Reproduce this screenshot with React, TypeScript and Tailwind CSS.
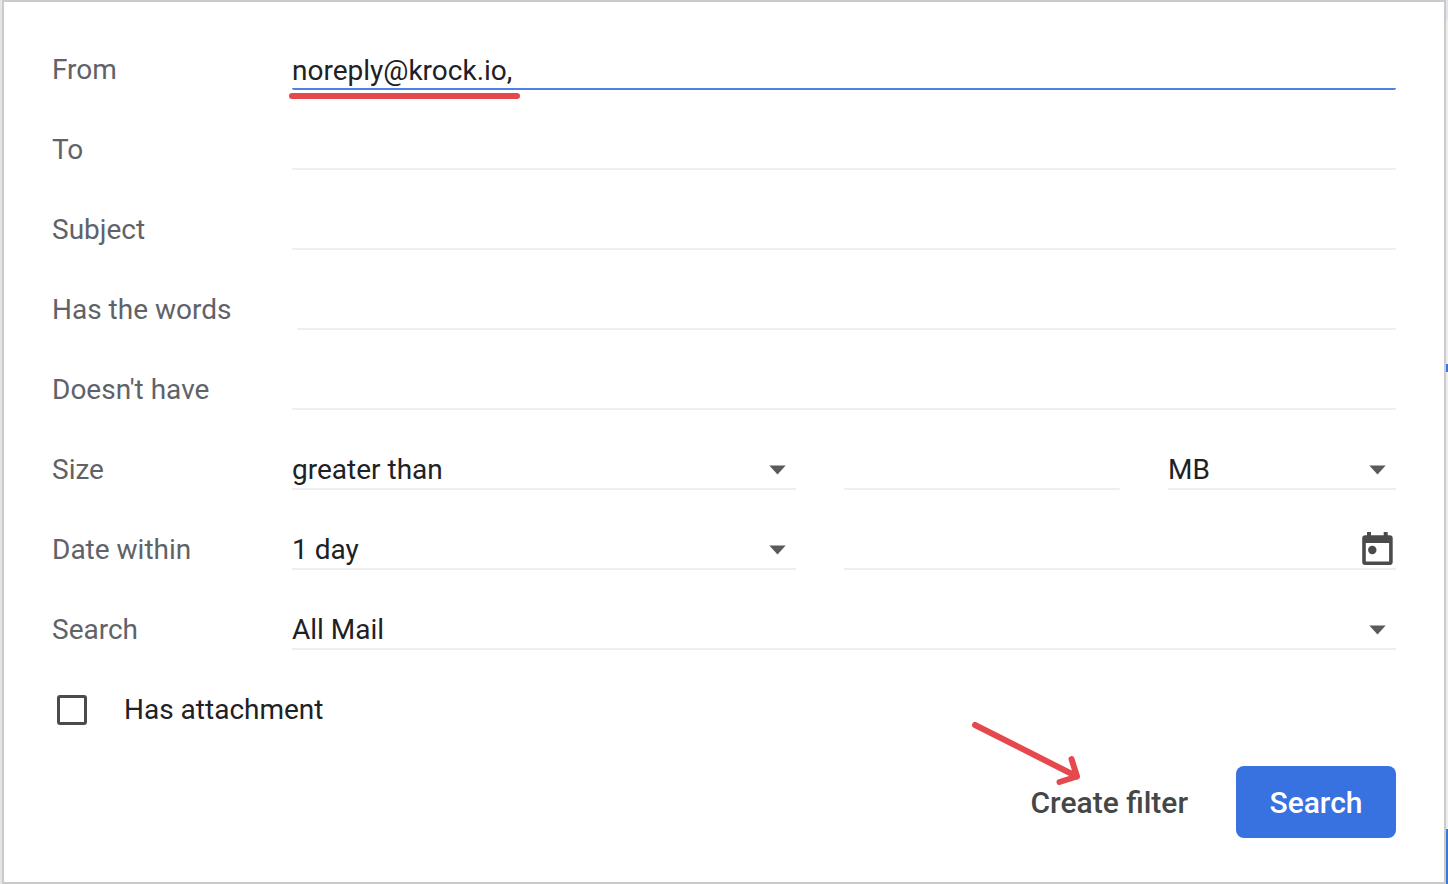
import type { ReactNode } from "react";

const lineClass = "h-10 w-full border-b-2 bg-transparent pt-0.5 text-[28px] leading-9 text-[#202124] outline-none";

function Row({ id, label, children }: { id: string; label: string; children: ReactNode }) {
  return (
    <div className="flex h-10">
      <label htmlFor={id} className="w-60 shrink-0 whitespace-nowrap text-[28px] leading-10 text-[#5f6368]">
        {label}
      </label>
      <div className="min-w-0 flex-1">{children}</div>
    </div>
  );
}

function TextField({ id, label }: { id: string; label?: string }) {
  return <input id={id} type="text" aria-label={label} className={`${lineClass} rounded-xs border-[#eeeeee]`} />;
}

function Dropdown({ id, label, options }: { id: string; label?: string; options: string[] }) {
  return (
    <div className="relative">
      <select id={id} aria-label={label} className={`${lineClass} appearance-none border-[#eeeeee] pr-10`}>
        {options.map((option) => (
          <option key={option}>{option}</option>
        ))}
      </select>
      <svg
        className="pointer-events-none absolute top-[15px] right-2.5"
        width="17"
        height="10"
        viewBox="0 0 17 10"
        aria-hidden="true"
      >
        <path d="M0.300 0.500h16.400L8.500 9.500z" fill="#5a5a5a" />
      </svg>
    </div>
  );
}

function CalendarIcon() {
  return (
    <svg width="31" height="34" viewBox="0 0 31 34" aria-hidden="true">
      <path
        fillRule="evenodd"
        d="M5 0h4v3.300h12.700V0h4v3.300h2a3 3 0 0 1 3 3V30a3 3 0 0 1-3 3H3.200a3 3 0 0 1-3-3V6.300a3 3 0 0 1 3-3H5zM3.800 11v18.500h23.300V11z"
        fill="#4b4b4b"
      />
      <circle cx="10.300" cy="18" r="4.200" fill="#4b4b4b" />
    </svg>
  );
}

export default function App() {
  return (
    <div className="flex min-h-screen bg-[#e4e4ea] pl-0.5 font-['Roboto',sans-serif]">
      <form
        className="flex-1 border-2 border-[#cacaca] bg-white px-12 pt-12 pb-11"
        onSubmit={(event) => event.preventDefault()}
      >
        <div className="flex flex-col gap-10">
          <Row id="from" label="From">
            <div className="relative">
              <input
                id="from"
                type="text"
                defaultValue="noreply@krock.io,"
                spellCheck={false}
                className={`${lineClass} rounded-xs border-[#4f80e6]`}
              />
              <span className="absolute top-[43px] -left-[3px] h-1.5 w-[231px] rounded-full bg-[#e5484d]" />
            </div>
          </Row>
          <Row id="to" label="To">
            <TextField id="to" />
          </Row>
          <Row id="subject" label="Subject">
            <TextField id="subject" />
          </Row>
          <Row id="has-words" label="Has the words">
            <div className="pl-[5px]">
              <TextField id="has-words" />
            </div>
          </Row>
          <Row id="without" label="Doesn't have">
            <TextField id="without" />
          </Row>
          <Row id="size" label="Size">
            <div className="grid grid-cols-[504fr_276fr_228fr] gap-12">
              <Dropdown id="size" options={["greater than", "less than"]} />
              <TextField id="size-value" label="Size value" />
              <Dropdown id="size-unit" label="Size unit" options={["MB", "KB", "Bytes"]} />
            </div>
          </Row>
          <Row id="date-within" label="Date within">
            <div className="grid grid-cols-[504fr_276fr_228fr] gap-12">
              <Dropdown id="date-within" options={["1 day", "3 days", "1 week", "1 month"]} />
              <div className="col-span-2 flex h-10 items-start border-b-2 border-[#eeeeee]">
                <input
                  type="text"
                  aria-label="Date"
                  className="h-full min-w-0 flex-1 bg-transparent text-[28px] text-[#202124] outline-none"
                />
                <button type="button" aria-label="Choose date" className="px-[3px] pt-0.5">
                  <CalendarIcon />
                </button>
              </div>
            </div>
          </Row>
          <Row id="scope" label="Search">
            <Dropdown id="scope" options={["All Mail", "Inbox", "Sent Mail", "Spam", "Trash"]} />
          </Row>
          <div className="flex h-10 items-center gap-8">
            <span className="flex size-10 items-center justify-center">
              <input
                id="attachment"
                type="checkbox"
                className="size-[30px] appearance-none rounded-[3px] border-3 border-[#4b4b4b] checked:bg-[#4b4b4b]"
              />
            </span>
            <label htmlFor="attachment" className="text-[28px] leading-10 text-[#202124]">
              Has attachment
            </label>
          </div>
        </div>

        <div className="mt-9 flex justify-end gap-12">
          <div className="relative">
            <button type="button" className="h-18 text-[30px] font-medium text-[#444746]">
              Create filter
            </button>
            <svg
              className="pointer-events-none absolute -top-12 right-24"
              width="124"
              height="72"
              viewBox="0 0 124 72"
              fill="none"
              stroke="#e5484d"
              strokeWidth="6"
              strokeLinecap="round"
              strokeLinejoin="round"
              aria-hidden="true"
            >
              <path d="M7 7l102 51.500M103.500 41l5.500 17.500-17.500 5.500" />
            </svg>
          </div>
          <button type="submit" className="h-18 w-40 rounded-lg bg-[#3871e0] text-[30px] font-medium text-white">
            Search
          </button>
        </div>
      </form>
      <div className="flex w-0.5 flex-col bg-[#eeeeee]" aria-hidden="true">
        <div className="h-5 bg-[#e4e4ea]" />
        <div className="h-[344px]" />
        <div className="h-2 bg-[#3c78d8]" />
        <div className="flex-1" />
        <div className="h-[55px] bg-[#3c78d8]" />
      </div>
    </div>
  );
}
